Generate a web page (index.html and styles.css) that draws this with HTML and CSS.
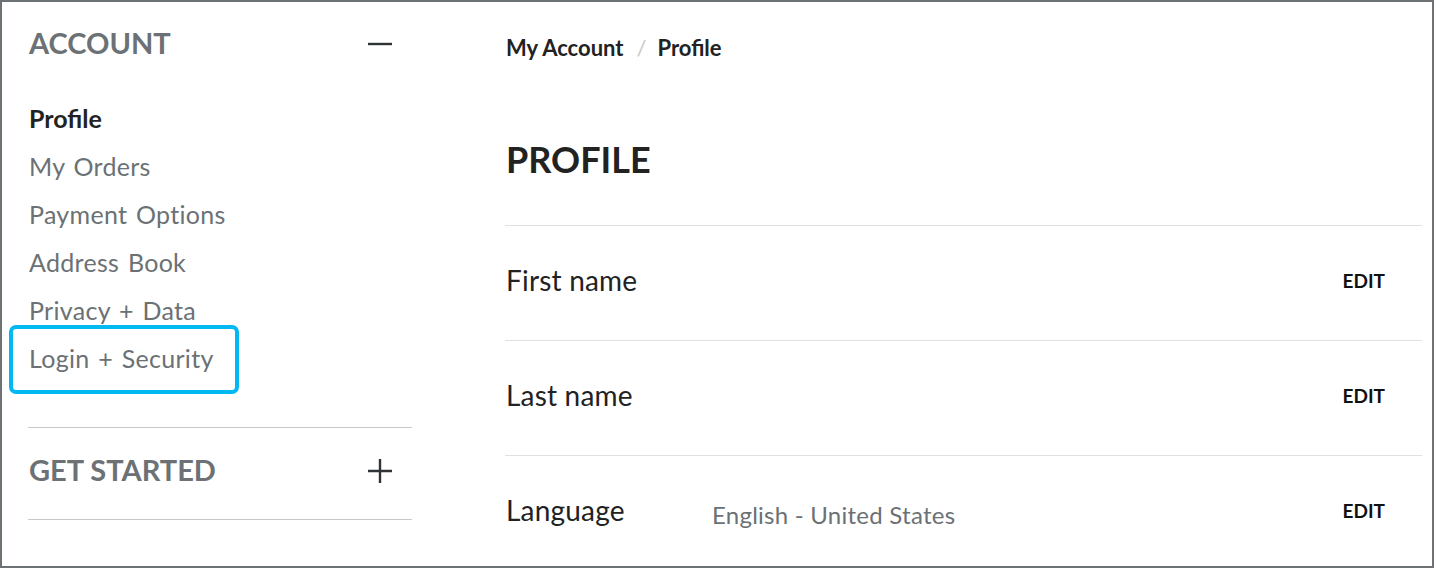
FILE: index.html
```html
<!DOCTYPE html>
<html lang="en">
<head>
<meta charset="utf-8">
<title>My Account - Profile</title>
<link rel="stylesheet" href="styles.css">
</head>
<body>
<div class="frame">
  <aside class="sidebar">
    <section class="side-section">
      <div class="side-head">
        <h2 class="side-title">ACCOUNT</h2>
        <svg class="toggle" width="24" height="24" viewBox="0 0 24 24" aria-hidden="true"><path d="M0 12H24" stroke="#2f3336" stroke-width="2.4"/></svg>
      </div>
      <ul class="side-menu">
        <li class="side-item active">Profile</li>
        <li class="side-item">My Orders</li>
        <li class="side-item">Payment Options</li>
        <li class="side-item">Address Book</li>
        <li class="side-item">Privacy + Data</li>
        <li class="side-item highlighted">Login + Security<span class="highlight-box"></span></li>
      </ul>
    </section>
    <section class="side-section bordered">
      <div class="side-head">
        <h2 class="side-title">GET STARTED</h2>
        <svg class="toggle" width="24" height="24" viewBox="0 0 24 24" aria-hidden="true"><path d="M0 12H24M12 0V24" stroke="#2f3336" stroke-width="2.4"/></svg>
      </div>
    </section>
  </aside>
  <main class="content">
    <nav class="breadcrumb">
      <span class="crumb">My Account</span>
      <span class="crumb-sep">/</span>
      <span class="crumb">Profile</span>
    </nav>
    <h1 class="page-title">PROFILE</h1>
    <div class="rows">
      <div class="row">
        <span class="row-label">First name</span>
        <span class="row-value"></span>
        <span class="row-edit">EDIT</span>
      </div>
      <div class="row">
        <span class="row-label">Last name</span>
        <span class="row-value"></span>
        <span class="row-edit">EDIT</span>
      </div>
      <div class="row">
        <span class="row-label">Language</span>
        <span class="row-value">English - United States</span>
        <span class="row-edit">EDIT</span>
      </div>
    </div>
  </main>
</div>
</body>
</html>
```

FILE: styles.css
```css
* { box-sizing: border-box; }
html, body { margin: 0; padding: 0; background: #fff; }
body {
  font-family: Lato, "Noto Sans", "Liberation Sans", sans-serif;
  color: #222;
}
.frame {
  width: 1434px;
  height: 568px;
  border: 2px solid #6d7375;
  display: flex;
  overflow: hidden;
}
.sidebar {
  width: 384px;
  margin-left: 26px;
  flex: none;
}
.side-section { padding: 20px 0 28px; }
.side-section.bordered { border-top: 1px solid #c8c8c8; border-bottom: 1px solid #c8c8c8; padding: 21px 0 26px; }
.side-head {
  height: 44px;
  display: flex;
  align-items: center;
  justify-content: space-between;
  padding: 0 20px 0 1px;
}
.side-title {
  margin: 0;
  padding-bottom: 3px;
  font-size: 29px;
  font-weight: 700;
  color: #6b7174;
}
.toggle { display: block; }
.side-menu {
  list-style: none;
  margin: 28px 0 17px;
  padding: 0 0 0 1px;
}
.side-item {
  height: 48px;
  line-height: 48px;
  font-size: 25px;
  color: #6b7174;
  letter-spacing: 0.3px;
  word-spacing: 2px;
  position: relative;
}
.side-item.active { color: #222; font-weight: 700; letter-spacing: 0; }
.highlight-box {
  position: absolute;
  left: -20px;
  top: -9px;
  width: 230px;
  height: 69px;
  border: 4px solid #00b9f2;
  border-radius: 7px;
}
.content {
  flex: 1;
  margin-left: 93px;
  margin-right: 10px;
  padding-top: 31px;
}
.breadcrumb {
  display: flex;
  align-items: center;
  height: 28px;
  font-size: 22px;
  font-weight: 700;
  color: #222;
  padding-left: 1px;
}
.crumb-sep { color: #c8c8c8; font-weight: 400; margin: 0 11px 0 13px; }
.page-title {
  margin: 74px 0 0;
  height: 48px;
  line-height: 48px;
  font-size: 36px;
  font-weight: 700;
  padding-left: 1px;
  color: #222;
}
.rows { margin-top: 42px; }
.row {
  height: 115px;
  border-top: 1px solid #e0e0e0;
  display: flex;
  align-items: center;
  padding: 0 37px 6px 1px;
}
.row-label {
  width: 206px;
  font-size: 28px;
  color: #222;
  letter-spacing: 0.2px;
}
.row-value {
  flex: 1;
  font-size: 24px;
  color: #6b7174;
  margin-top: 8px;
  letter-spacing: 0.25px;
}
.row-edit {
  font-size: 19px;
  font-weight: 700;
  color: #111;
}
```
